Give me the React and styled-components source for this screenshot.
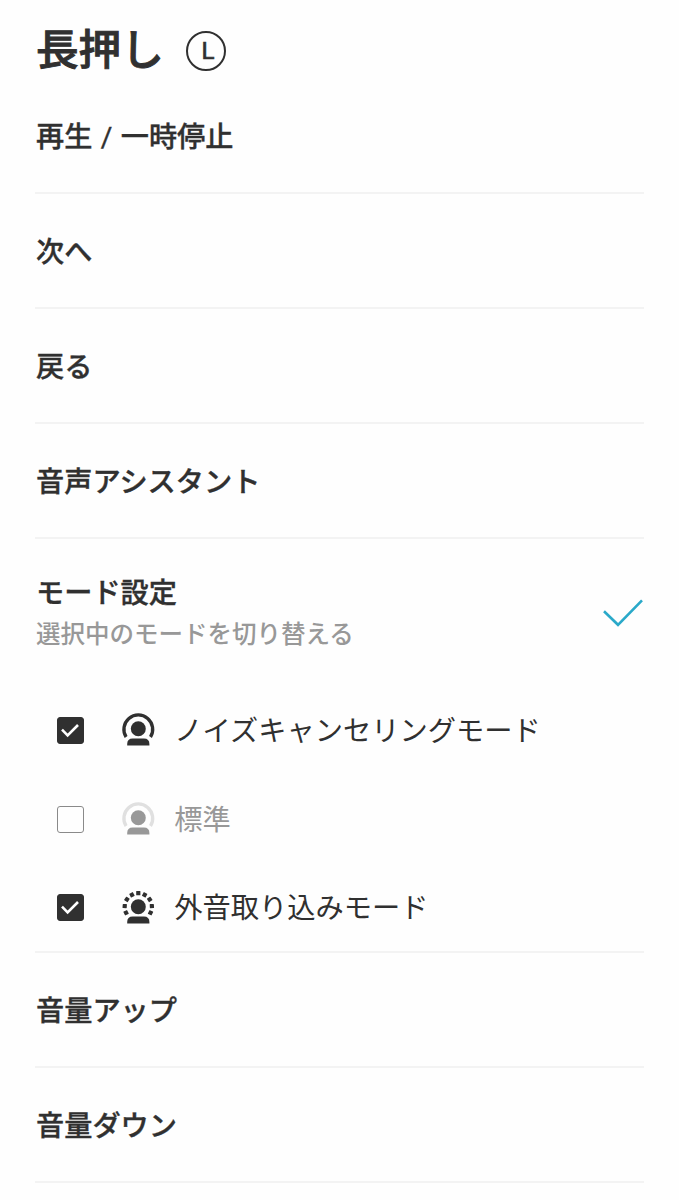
import React from "react";
import styled, { createGlobalStyle } from "styled-components";

const GlobalStyle = createGlobalStyle`
  * { box-sizing: border-box; }
  body {
    margin: 0;
    background: #fefefe;
    color: #303030;
    font-family: "Noto Sans CJK JP", "Noto Sans", sans-serif;
  }
`;

const Page = styled.main`
  width: 679px;
  height: 1200px;
  padding: 0 35px;
  overflow: hidden;
`;

const Header = styled.header`
  display: flex;
  align-items: flex-start;
  gap: 22.7px;
  height: 79px;
  padding: 19px 0 0 1px;
`;

const Title = styled.h1`
  margin: 0;
  font-size: 42.6px;
  font-weight: 500;
  line-height: 56px;
  white-space: nowrap;
  -webkit-text-stroke: 0.9px currentColor;
`;

const SideBadge = styled.span`
  display: flex;
  align-items: center;
  justify-content: center;
  width: 40px;
  height: 40px;
  margin-top: 12px;
  padding-left: 3px;
  border: 2.5px solid #303030;
  border-radius: 50%;
  font: 400 24px/36px Roboto, sans-serif;
  -webkit-text-stroke: 0.7px currentColor;
`;

const Row = styled.div`
  display: flex;
  align-items: center;
  height: 115px;
  padding: 0 0 2px 1px;
  border-bottom: 2px solid #f3f3f3;
`;

const Label = styled.span`
  font-size: 28.2px;
  font-weight: 500;
  line-height: 42px;
  white-space: nowrap;
  -webkit-text-stroke: 0.35px currentColor;
`;

const Slash = styled.span`
  margin: 0 2px;
  font-family: Roboto, sans-serif;
  font-weight: 400;
  line-height: 1;
`;

const ModeSection = styled.section`
  height: 414px;
  border-bottom: 2px solid #f3f3f3;
`;

const ModeHeader = styled.div`
  display: flex;
  align-items: center;
  justify-content: space-between;
  height: 147px;
`;

const ModeText = styled.div`
  display: flex;
  flex-direction: column;
  padding: 0 0 2px 1px;
`;

const Caption = styled.span`
  color: #989898;
  font-size: 24.5px;
  font-weight: 500;
  line-height: 42px;
  white-space: nowrap;
`;

const Option = styled.div`
  display: flex;
  align-items: center;
  height: 88.7px;
  padding-left: 22px;
  color: ${(p) => (p.$off ? "#989898" : "#303030")};
`;

const CheckBox = styled.span`
  display: flex;
  width: 27px;
  height: 27px;
  margin-right: 36px;
  border-radius: 3px;
  border: 1.5px solid ${(p) => (p.$checked ? "#303030" : "#8a8a8a")};
  background: ${(p) => (p.$checked ? "#303030" : "#fefefe")};
`;

const OptionLabel = styled.span`
  margin-left: 18.3px;
  padding-bottom: 3px;
  font-size: 28.25px;
  line-height: 42px;
  white-space: nowrap;
`;

const DOT_ANGLES = [-116, -87, -57, -28, 0, 28, 57, 87, 116];

function ModeIcon({ kind }) {
  return (
    <svg width="36" height="36" viewBox="0 0 36 36" fill="currentColor">
      <circle cx="18.3" cy="16.7" r="7.5" />
      <path d="M7.2 33.6v-1.7q0-5.5 5.5-5.5h11.2q5.5 0 5.5 5.5v1.7z" />
      {kind === "ambient" ? (
        DOT_ANGLES.map((a) => (
          <rect key={a} x="16.2" y="1.1" width="4.2" height="4.2" rx="0.5" transform={`rotate(${a} 18.3 16.8)`} />
        ))
      ) : (
        <path
          d="M6.1 25a14.4 14.4 0 1 1 24.4 0"
          fill="none"
          stroke={kind === "normal" ? "#e0e0e0" : "currentColor"}
          strokeWidth="3.3"
        />
      )}
    </svg>
  );
}

function Tick() {
  return (
    <svg width="24" height="24" viewBox="0 0 24 24" fill="none" stroke="#fff" strokeWidth="2.6">
      <path d="M4 11.7l5.6 5.6L20 7" />
    </svg>
  );
}

const OPTIONS = [
  { kind: "cancel", label: "ノイズキャンセリングモード", checked: true },
  { kind: "normal", label: "標準", checked: false },
  { kind: "ambient", label: "外音取り込みモード", checked: true },
];

function ActionRow({ children }) {
  return (
    <Row>
      <Label>{children}</Label>
    </Row>
  );
}

export default function App() {
  return (
    <>
      <GlobalStyle />
      <Page>
        <Header>
          <Title>長押し</Title>
          <SideBadge>L</SideBadge>
        </Header>
        <ActionRow>再生 <Slash>/</Slash> 一時停止</ActionRow>
        <ActionRow>次へ</ActionRow>
        <ActionRow>戻る</ActionRow>
        <ActionRow>音声アシスタント</ActionRow>
        <ModeSection>
          <ModeHeader>
            <ModeText>
              <Label>モード設定</Label>
              <Caption>選択中のモードを切り替える</Caption>
            </ModeText>
            <svg width="42" height="30" viewBox="0 0 42 30" fill="none" stroke="#2aa9c9" strokeWidth="2.6">
              <path d="M2 13.2l14 13.6L40 2.4" />
            </svg>
          </ModeHeader>
          {OPTIONS.map((o) => (
            <Option key={o.kind} $off={!o.checked}>
              <CheckBox $checked={o.checked}>{o.checked && <Tick />}</CheckBox>
              <ModeIcon kind={o.kind} />
              <OptionLabel>{o.label}</OptionLabel>
            </Option>
          ))}
        </ModeSection>
        <ActionRow>音量アップ</ActionRow>
        <ActionRow>音量ダウン</ActionRow>
      </Page>
    </>
  );
}
